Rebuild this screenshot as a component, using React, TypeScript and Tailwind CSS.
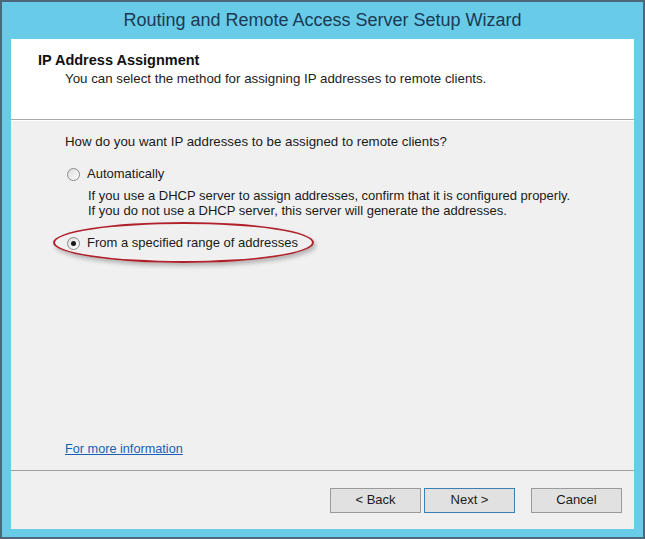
import React from 'react';

const font = { fontFamily: '"Liberation Sans", Arial, sans-serif' };

const Radio = ({ checked }: { checked?: boolean }) => (
  <span className="relative flex h-[13px] w-[13px] shrink-0 items-center justify-center rounded-full border border-[#8a8a8a] bg-gradient-to-br from-[#dcdcdc] to-white">
    {checked && <span className="h-[5px] w-[5px] rounded-full bg-[#1a1a1a]" />}
  </span>
);

const Button = ({ label, primary }: { label: string; primary?: boolean }) => (
  <button
    className={`flex h-[25px] w-[91px] items-center justify-center border bg-[#e1e1e1] text-[13px] text-[#1a1a1a] ${
      primary ? 'border-[#3c7fb1]' : 'border-[#9a9a9a]'
    }`}
  >
    {label}
  </button>
);

export default function App() {
  return (
    <div className="h-[539px] w-[645px] bg-white" style={font}>
      <div className="flex h-full w-full flex-col border-2 border-[#4d6878] bg-[#68cbe8] px-[9px] pb-[8px]">
        {/* Title bar */}
        <div className="flex h-[37px] shrink-0 items-center justify-center text-[18px] text-[#1b3a52]">
          Routing and Remote Access Server Setup Wizard
        </div>

        <div className="flex flex-1 flex-col bg-[#f0f0f0]">
          {/* Header */}
          <div className="h-[81px] shrink-0 border-b border-[#a9a9a9] bg-white pl-[27px] pt-[12px]">
            <div className="text-[14.5px] leading-[18px] font-bold text-[#111]">IP Address Assignment</div>
            <div className="mt-[2px] pl-[27px] text-[13.3px] leading-[16px] text-[#222]">
              You can select the method for assigning IP addresses to remote clients.
            </div>
          </div>

          {/* Body */}
          <div className="relative flex flex-1 flex-col border-t border-white pl-[54px] pt-[13px] text-[13px] leading-[16px] text-[#1a1a1a]">
            <div className="text-[13.3px]">How do you want IP addresses to be assigned to remote clients?</div>

            <div className="mt-[16px] flex items-center gap-[7px] pl-[2px]">
              <Radio />
              <span>Automatically</span>
            </div>
            <div className="mt-[6px] pl-[23px] leading-[15px]">
              <div>If you use a DHCP server to assign addresses, confirm that it is configured properly.</div>
              <div>If you do not use a DHCP server, this server will generate the addresses.</div>
            </div>

            <div className="mt-[17px] flex items-center gap-[7px] pl-[2px]">
              <Radio checked />
              <span>From a specified range of addresses</span>
            </div>

            {/* Red highlight ellipse */}
            <div className="absolute left-[42px] top-[101px] h-[41px] w-[261px] rounded-[50%] border-2 border-[#b0202a] shadow-[2px_3px_4px_rgba(0,0,0,0.25)]" />

            <div className="mt-auto mb-[13px]">
              <span className="text-[12.7px] text-[#1a5fb4] underline">For more information</span>
            </div>
          </div>

          {/* Footer */}
          <div className="flex h-[59px] shrink-0 items-center justify-end border-t border-[#a0a0a0] pr-[12px]">
            <div className="flex gap-[3px]">
              <Button label="< Back" />
              <Button label="Next >" primary />
            </div>
            <div className="ml-[16px]">
              <Button label="Cancel" />
            </div>
          </div>
        </div>
      </div>
    </div>
  );
}
